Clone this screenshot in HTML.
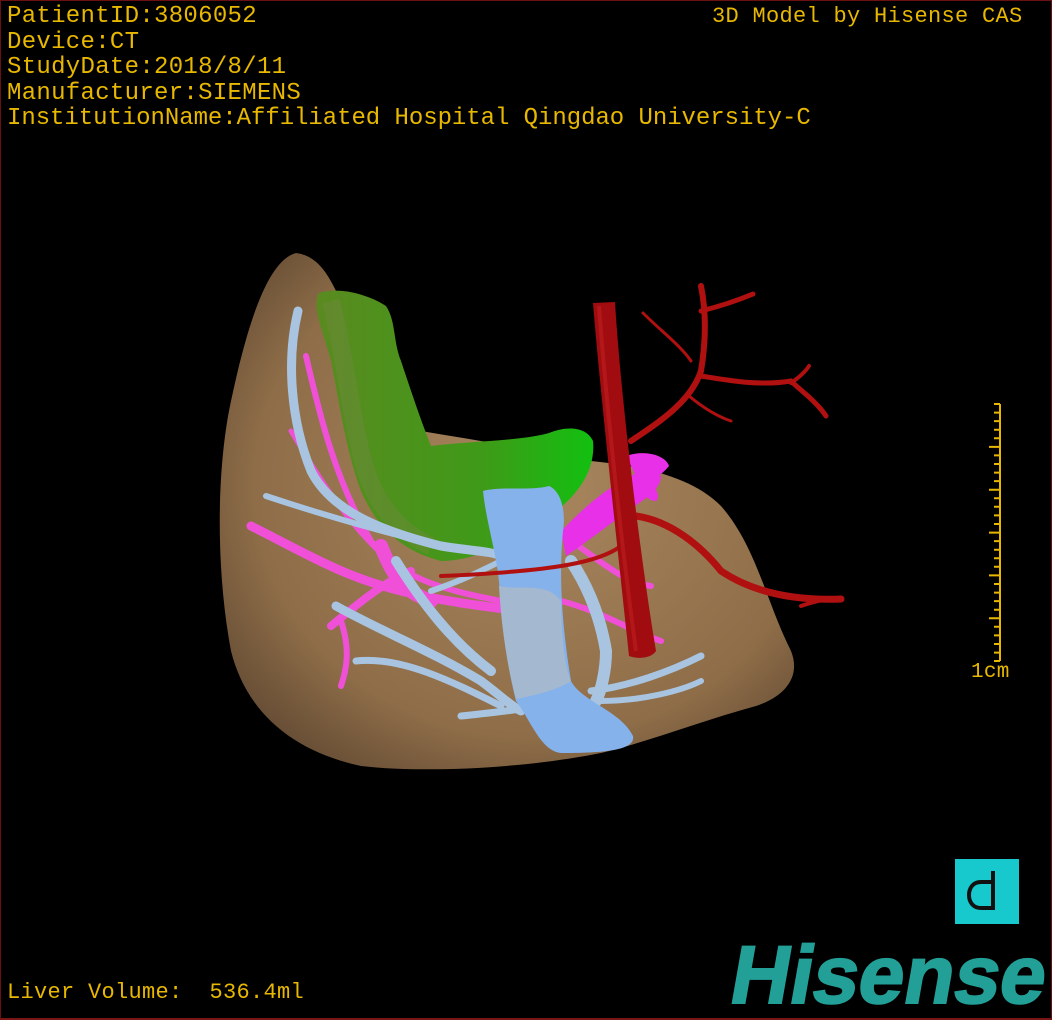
<!DOCTYPE html>
<html><head><meta charset="utf-8"><style>
html,body{margin:0;padding:0;background:#000;}
#w{position:relative;width:1052px;height:1020px;background:#000;overflow:hidden;box-sizing:border-box;border:1px solid #6a1010;border-bottom:2px solid #7a1515;}
.t{position:absolute;font-family:"Liberation Mono",monospace;color:#e8b800;font-size:24px;line-height:25.6px;white-space:pre;letter-spacing:0.3px;}
svg{position:absolute;left:0;top:0;}
</style></head><body><div id="w">
<svg width="1052" height="1020" viewBox="0 0 1052 1020">
<defs>
<radialGradient id="lg" cx="0.55" cy="0.45" r="0.7"><stop offset="0" stop-color="#a8865e"/><stop offset="0.7" stop-color="#8e6d48"/><stop offset="1" stop-color="#5c4530"/></radialGradient>
<linearGradient id="gg" x1="0" y1="0" x2="1" y2="0"><stop offset="0" stop-color="#5a8a20"/><stop offset="0.6" stop-color="#3f9a18"/><stop offset="1" stop-color="#12c010"/></linearGradient>
</defs>
<path d="M295,252 C320,255 330,280 340,300 L420,430 C480,440 540,450 590,460 C640,465 690,475 720,505 C755,545 765,600 790,650 C800,675 785,695 755,705 C700,720 650,740 600,752 C520,768 420,772 360,765 C290,750 245,710 230,650 C215,570 215,470 230,400 C245,330 265,260 295,252 Z" fill="url(#lg)"/>
<path d="M318,292 C340,285 370,295 385,305 C395,320 392,340 400,360 C410,390 420,420 430,445 C470,440 520,440 548,432 C565,425 585,425 592,440 C595,470 575,495 555,510 C520,535 480,560 440,560 C400,550 375,525 360,490 C345,450 338,400 330,360 C322,330 310,305 318,292 Z" fill="url(#gg)"/>
<path d="M330,300 C345,360 350,420 365,470 C375,500 395,530 430,545" stroke="#6c8a3a" stroke-width="18" fill="none" opacity="0.5"/>
<g stroke="#f050d8" fill="none" stroke-linecap="round">
<path d="M305,355 C320,420 335,480 370,540 C400,580 450,590 500,600" stroke-width="6"/>
<path d="M290,430 C320,480 350,530 400,570" stroke-width="5"/>
<path d="M250,525 C300,550 340,575 400,590 C440,600 480,605 520,610" stroke-width="9"/>
<path d="M340,620 C350,650 345,670 340,685" stroke-width="6"/>
<path d="M330,625 C360,600 385,580 410,570" stroke-width="8"/>
<path d="M570,540 C600,560 620,580 650,585" stroke-width="6"/>
<path d="M560,600 C600,610 630,630 660,640" stroke-width="6"/>
<path d="M380,545 C390,570 400,590 430,600" stroke-width="14"/>
</g>
<path d="M560,530 C580,510 605,485 640,470 L660,475 C660,490 640,500 620,515 C600,530 580,545 565,555 Z" fill="#e830e8"/>
<path d="M625,455 C645,448 665,455 668,465 C660,475 650,480 640,485 Z" fill="#e830e8"/>
<path d="M645,480 C655,485 660,495 655,500 C645,500 640,490 645,480Z" fill="#e830e8"/>
<g stroke="#a8c4e0" fill="none" stroke-linecap="round">
<path d="M297,310 C285,360 290,420 310,470 C330,510 380,530 440,545 C470,550 490,550 500,555" stroke-width="9"/>
<path d="M265,495 C310,510 360,525 420,540" stroke-width="6"/>
<path d="M335,605 C380,630 430,650 480,680 C500,695 510,705 520,710" stroke-width="9"/>
<path d="M355,660 C400,655 450,680 500,705" stroke-width="7"/>
<path d="M460,715 C490,712 520,708 545,705" stroke-width="7"/>
<path d="M395,560 C420,600 450,640 490,670" stroke-width="10"/>
<path d="M570,560 C590,590 600,620 605,650 C605,670 600,690 595,700" stroke-width="12"/>
<path d="M590,690 C630,685 670,670 700,655" stroke-width="7"/>
<path d="M600,700 C640,700 680,690 700,680" stroke-width="6"/>
<path d="M430,590 C460,580 480,570 500,560" stroke-width="6"/>
</g>
<path d="M482,490 C500,485 530,490 548,485 C560,490 565,510 562,530 C558,570 560,620 570,680 C580,700 620,710 632,735 C635,750 600,752 560,752 C540,750 530,720 515,700 C505,660 500,620 498,580 C495,550 485,520 482,490 Z" fill="#86b2ec"/>
<path d="M498,585 C520,590 545,580 560,600 C560,640 565,670 570,680 C555,690 530,695 515,698 C505,660 500,620 498,585 Z" fill="#a4b8d0"/>
<g stroke="#b01010" fill="none" stroke-linecap="round">
<path d="M630,440 C660,420 690,400 700,370 C705,340 705,310 700,285" stroke-width="6"/>
<path d="M700,310 C720,305 740,298 752,293" stroke-width="5"/>
<path d="M700,375 C730,380 760,385 790,380 C800,390 815,400 825,415" stroke-width="5"/>
<path d="M790,382 C800,375 805,370 808,365" stroke-width="4"/>
<path d="M642,312 C660,330 680,345 690,360" stroke-width="3"/>
<path d="M688,395 C700,405 715,415 730,420" stroke-width="3"/>
<path d="M635,515 C670,520 700,545 720,570 C750,590 790,600 840,598" stroke-width="7"/>
<path d="M800,605 C815,600 825,598 830,598" stroke-width="4"/>
<path d="M620,545 C600,560 560,570 440,575" stroke-width="4"/>
</g>
<path d="M592,302 L614,301 C620,400 640,560 655,650 C650,658 635,658 628,655 C618,560 600,400 592,302 Z" fill="#a00c10"/>
<path d="M598,305 C605,400 620,540 635,650" stroke="#c02020" stroke-width="4" fill="none" opacity="0.6"/>
<g stroke="#e8b800" stroke-width="2" fill="none">
<path d="M999,403 V660"/>
<path d="M993,403H999M993,411.6H999M993,420.1H999M993,428.7H999M993,437.3H999M988,445.9H999M993,454.4H999M993,463H999M993,471.6H999M993,480.1H999M988,488.7H999M993,497.3H999M993,505.8H999M993,514.4H999M993,523H999M988,531.6H999M993,540.1H999M993,548.7H999M993,557.3H999M993,565.8H999M988,574.4H999M993,583H999M993,591.6H999M993,600.1H999M993,608.7H999M988,617.3H999M993,625.8H999M993,634.4H999M993,643H999M993,651.6H999M993,660H999"/>
</g>
<rect x="954" y="858" width="64" height="65" fill="#17c8cc"/>
<path d="M992,870 V907 H980 C972,907 968,901 968,894 C968,887 972,881 980,881 H992" stroke="#111" stroke-width="4" fill="none"/>
</svg>
<div class="t" style="left:6px;top:3px">PatientID:3806052
Device:CT
StudyDate:2018/8/11
Manufacturer:SIEMENS
</div>
<div class="t" style="left:6px;top:105px;letter-spacing:-0.05px">InstitutionName:Affiliated Hospital Qingdao University-C</div>
<div class="t" style="left:711px;top:3px;font-size:22px">3D Model by Hisense CAS</div>
<div class="t" style="left:970px;top:659px;font-size:21px">1cm</div>
<div class="t" style="left:6px;top:979px;font-size:22px">Liver Volume:  536.4ml</div>
<div style="position:absolute;left:724px;top:935px;font-family:'Liberation Sans',sans-serif;font-weight:bold;font-size:82px;line-height:80px;color:#22a098;letter-spacing:0px;-webkit-text-stroke:2px #22a098;transform:skewX(-10deg);transform-origin:left bottom;">Hisense</div>
</div></body></html>
